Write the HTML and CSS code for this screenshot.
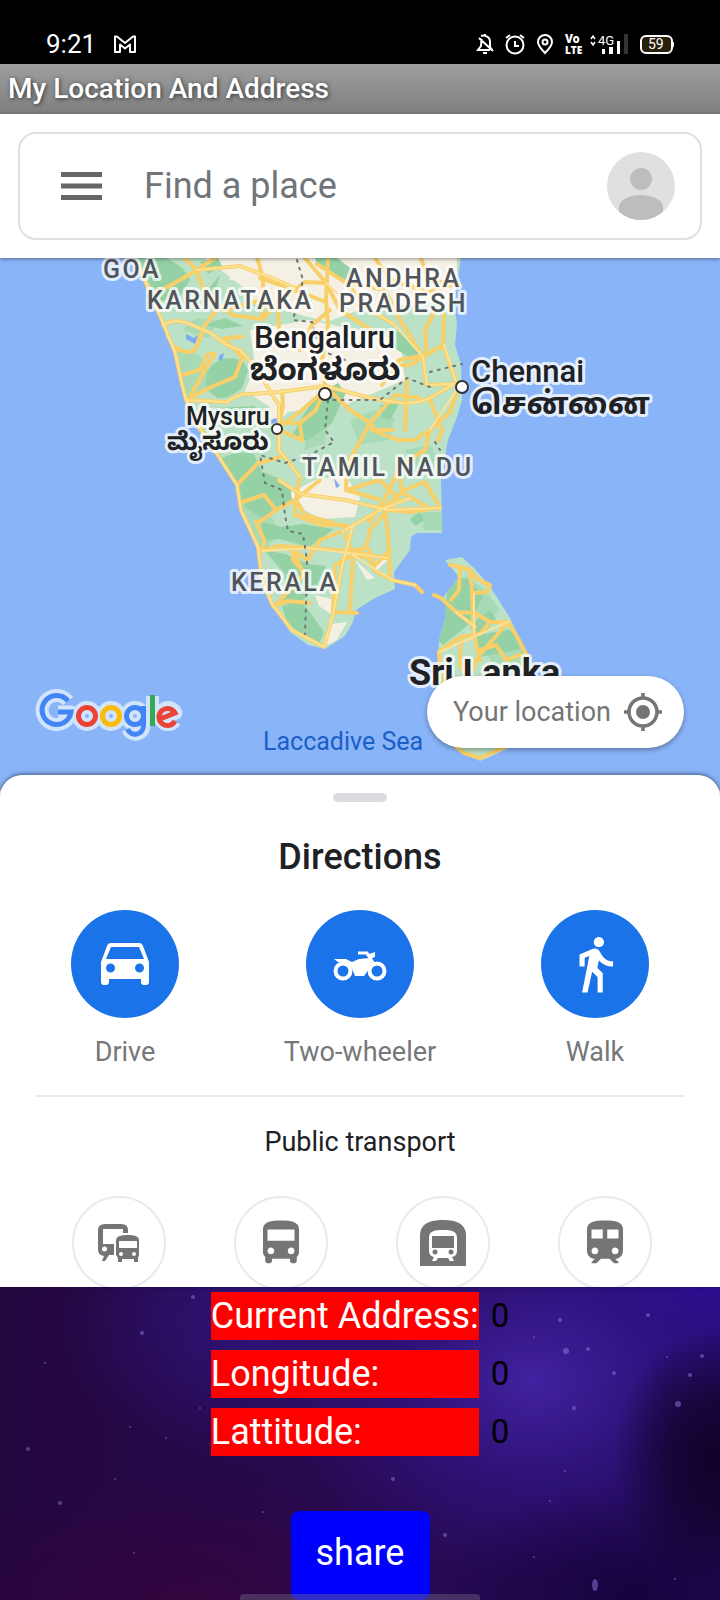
FILE: index.html
```html
<!DOCTYPE html>
<html lang="en">
<head>
<meta charset="utf-8">
<meta name="viewport" content="width=device-width, initial-scale=1">
<title>My Location And Address</title>
<link rel="stylesheet" href="styles.css">
</head>
<body>
<div class="screen">
  <div class="status">
    <span class="clock">9:21</span>
    <svg class="mail" viewBox="0 0 22 18" width="22" height="18"><path d="M1 17V1.500h2l8 6.500 8-6.500h2V17h-5V9.500l-5 4-5-4V17z" fill="none" stroke="#fff" stroke-width="2" stroke-linejoin="round"/></svg>
    <svg class="status-icons" viewBox="470 30 210 28" width="210" height="28">
      <g fill="none" stroke="#fff" stroke-width="2">
        <path d="M482 39c-1 2-1 4-1 7l-3 4h12M481 36c3-1 9 0 9 6v5l3 4M485 34v2M479 38l14 13M483 53h4"/>
        <circle cx="515" cy="45" r="8.500"/><path d="M515 41v5h4M506 38l4-3M524 38l-4-3"/>
        <path d="M545 53c-4-4-7-7-7-11a7 7 0 0 1 14 0c0 4-3 7-7 11z"/><circle cx="545" cy="42" r="2.500"/>
        <path d="M591 39l2-3 2 3M591 42l2 3 2-3" stroke-width="1.500"/>
        <rect x="641" y="36" width="31" height="17" rx="5" fill="#2a1f0a"/>
      </g>
      <path d="M602 49h3v5h-3zM609 47h4v7h-4zM617 41h3v13h-3z" fill="#fff"/>
      <path d="M624 34h4v20h-4z" fill="#333"/><path d="M673 42q1 2 0 5z" fill="#fff" stroke="#fff"/>
      <g class="tiny"><text x="565" y="43" font-size="12" font-weight="900">Vo</text><text x="565" y="54" font-size="12" font-weight="900" class="narrow">LTE</text><text x="598" y="45" font-size="13">4G</text><text x="648" y="49" font-size="14">59</text></g>
    </svg>
  </div>
  <h1 class="titlebar">My Location And Address</h1>
  <div class="header">
    <div class="search">
      <button class="icon-button" aria-label="Menu"><svg viewBox="0 0 42 28" width="42" height="28"><path d="M0 2.500h41M0 14h41M0 25.500h41" stroke="#666" stroke-width="5"/></svg></button>
      <input class="find" type="text" placeholder="Find a place" aria-label="Find a place">
      <button class="icon-button" aria-label="Account"><svg viewBox="0 0 68 68" width="68" height="68"><clipPath id="av"><circle cx="34" cy="34" r="34"/></clipPath><circle cx="34" cy="34" r="34" fill="#e0e0e0"/><circle cx="34" cy="27" r="11" fill="#bdbdbd"/><path clip-path="url(#av)" d="M12 68V55c0-7 10-12 22-12s22 5 22 12v13z" fill="#bdbdbd"/></svg></button>
    </div>
  </div>
  <div class="map">
    <svg class="map-art" viewBox="0 258 720 532" preserveAspectRatio="xMidYMin slice">
      <defs>
        <clipPath id="land"><path d="M135 258L145 285 160 312 166 337 176 352 180 380 186 400 194 425 220 459 237 484 241 512 258 546 262 580 273 606 290 632 308 645 325 649 345 636 353 622 356 610 375 598 395 589 394 572 410 550 411 537 416 533 442 533 441 478 448 440 457 417 462 400 461 364 455 345 457 325 454 300 461 258z"/><path d="M445 560L462 557 476 570 491 588 510 618 525 652 536 690 530 730 505 750 480 761 455 747 440 720 436 690 439 640 446 616 444 596 459 577z"/></clipPath>
      </defs>
      <path fill="#8ab4f8" d="M-400 258h1520v532H-400z"/>
      <g clip-path="url(#land)">
        <path fill="#bbe2c6" d="M100 250h460v540H100z"/>
        <path fill="#f5f0e4" d="M205 258l42 32 5 12 75 20 40-15 90-4V250H210zM250 330l60-10 90 20 5 40-60 25-65 8-35-22 10-25zM265 385l35 2-12 25-15 15zM280 498l35-18 30-5 15 22-5 20-33 2-20-10zM315 595l20 5-4 14-12-8zM331 624l16-2-10 18-12 6zM355 560l20 18-8 2zM376 560l12 0-13 12z"/>
        <g fill="#a9dab6">
          <path d="M176 352q22-4 30 12t-6 30l-16 4zM240 500l20 2 20 28-14 20-20-10zM350 420l25-10 20 8-6 22-30 4zM310 420l18 4-4 20-20 6zM405 450l25-5 8 14-20 10zM182 330l14-12 22 2-10 18z"/>
          <path d="M465 575l20 15 15 20-12 10-20-8zM485 650l30-15 15 25-30 20z"/>
        </g>
        <g fill="#94d1a5">
          <path d="M135 258h30q20 8 25 22l-10 16-20 6zM208 370q8-12 22-12t18 12l-6 18q-14 12-25 10l-12-10zM215 408l40-2 2 10-35 4zM222 458q16-8 32-4l8 18q14 4 28 14l2 14-26 20-20-12-20-35zM262 522l20 5 20-3 32 5-25 18-30-8-18 2zM264 550l22 4 22 10 18 2-10 20-18 20-15-2 2-30zM282 606l22-2 20 28-6 14-30-22zM313 398l25-15 8 10-14 30-25 18-15-5zM395 330q14 6 25 22l-6 8-20-12zM380 405l20-3-10 18-8-2zM410 520q12-14 14 0l-8 6z"/>
          <path d="M450 575l18 4 15 18-15 28-25 20-6-5 8-35zM470 625l20-15 6 8-12 16 28-5 8 20-40 8z"/>
          <path d="M315 258l22 0 16 12-8 12-28-18zM220 275l-18 22 12-2zM200 262l18-4 4 8-14 8zM205 325l20-7 18 8-22 3z"/>
        </g>
        <path fill="#a9dab6" d="M423 512h19v18h-19z"/>
        <path fill="#f5f0e4" d="M236 258h35l-2 24-40-2zM360 290l20 4-2 14-20-2z"/>
        <path fill="#7baaf0" d="M186 334l8 4 4-3-3 9-9-5zM220 355l4-2-2 8-4-2zM334 478l6 8-4 2zM270 420l6-2 2 4-7 2z"/>
      </g>
      <g fill="none" stroke-linejoin="round" stroke-linecap="round">
        <g class="roads">
          <path d="M137 262L151 295 163 323 175 352 181 380 186 400 199 427 219 457 237 485 241 510 258 547 262 580 272 604 292 630 324 647 333 615 343 562 353 525M163 325Q175 318 187 323T211 333Q225 346 240 350L260 372Q268 390 279 405L279 450 300 477 296 500 305 515 350 528M175 347Q187 355 195 350L205 325 220 306 232 315 262 319M182 375L200 370 207 355Q220 350 210 361L190 397M186 400L211 387 235 377 242 358 224 338 242 337M186 400L227 402Q240 392 251 394L280 392 325 386 370 398 395 402Q415 405 430 398L454 384M151 295L173 284 197 270 215 258M197 270L185 258M197 270Q202 290 209 294L225 310M197 270L240 266 272 278 295 288M257 258Q265 280 263 300L262 319M305 258L326 283 340 310 371 330M317 264L345 282 370 310 395 325M328 258L326 300 328 325 322 360 325 386"/>
          <path d="M326 302L292 289 260 278M263 319L278 302 305 282 326 283M279 330L278 302M375 258L390 280 430 292 454 284M421 258L428 280 460 285M399 318L423 357 426 385 454 384M435 311L425 330 427 355 399 360 382 385M444 315L443 345 423 357M443 345L452 370 458 388 450 412 430 430 415 440 398 440 372 430M407 380L405 430M360 365L410 365 423 357M282 391L283 405 279 427M279 427L301 411 319 395 325 386M279 423L300 423 316 410 325 388M279 430L302 440 300 425M325 386L350 410 370 423 395 395 420 398M370 423L358 445 347 465 346 490 378 499M370 423L375 430 393 430M430 430L425 450 401 465 384 500 369 522M279 480L300 494 345 500 388 510 440 508M237 485L258 463 280 457M242 502L264 495 276 510 261 521 256 522 264 540 262 551M262 551L278 546 310 548 350 551 387 558M276 510L295 500 320 480M295 500L295 515 322 525 345 525M343 531L380 510 410 498M345 535L353 555 350 612M353 555L335 565 333 612 357 613M343 531L320 540 308 560 292 550 300 565 303 575 278 603M293 548L293 560 302 570M310 603L288 601 273 606M353 555L370 558 374 570 392 580 415 585 422 592M385 505L388 535 390 575M388 510L370 530 366 548 350 551M380 510L405 490 425 482 440 508M400 500L380 480 347 490M369 550L374 566 390 550M398 465L402 492 430 509M430 400L442 430 438 440M330 310L312 325 300 350M345 282L385 290 399 318M225 310L262 300M388 510L410 512 430 509"/>
          <path d="M450 565L460 567 459 590 451 600M460 567L470 570 472 592 474 635 480 660M470 570Q475 580 490 585L487 592 474 593M434 595L441 598 456 612 475 627M456 612L475 613 490 622 508 622 519 640 528 658 535 690M508 622L478 657 470 675M439 652L460 637 480 634 490 622M439 652L441 680 437 710M461 640L460 665 468 678M480 650L496 645 506 660 520 655M450 742L464 753 480 758 510 745"/>
        </g>
        <g class="roads-light">
          <path d="M137 262L151 295 163 323 175 352 181 380 186 400 199 427 219 457 237 485 241 510 258 547 262 580 272 604 292 630 324 647 333 615 343 562 353 525M163 325Q175 318 187 323T211 333Q225 346 240 350L260 372Q268 390 279 405L279 450 300 477M186 400L227 402Q240 392 251 394L280 392 325 386 370 398 395 402Q415 405 430 398L454 384M197 270L240 266 272 278 295 288M326 283L345 300 370 310 395 325 423 357 427 385 454 384M444 345L458 388 430 430M343 531L380 510 410 498M262 551L310 548 387 558M353 555L392 580 415 585M279 480L300 494 345 500 388 510 440 508M456 612L475 627M439 652L480 634 508 622M474 593L474 635"/>
        </g>
        <path d="M297 260L303 280 293 320 312 322 320 350 345 360M430 387L407 378 380 400 350 400 328 400 325 430 334 442 310 455 285 463 260 455 265 483 282 490 285 515 288 531 303 534 307 560 306 605 305 634M430 372L462 364M435 442L440 450" stroke="#71767a" stroke-width="2" stroke-dasharray="2 6"/>
      </g>
      <g class="dots"><circle cx="325" cy="394" r="6"/><circle cx="462" cy="387" r="6"/><circle cx="277" cy="429" r="5"/></g>
      <g class="state">
        <text x="103" y="278">GOA</text><text x="147" y="309">KARNATAKA</text><text x="346" y="287">ANDHRA</text><text x="339" y="312">PRADESH</text><text x="302" y="476">TAMIL NADU</text><text x="231" y="591">KERALA</text>
      </g>
      <g class="city">
        <text x="254" y="348" font-size="31">Bengaluru</text><text x="250" y="380" font-size="31" class="local">ಬೆಂಗಳೂರು</text>
        <text x="471" y="382" font-size="31">Chennai</text><text x="471" y="414" font-size="31" class="local">சென்னை</text>
        <text x="186" y="425" font-size="25">Mysuru</text><text x="167" y="450" font-size="25" class="local">ಮೈಸೂರು</text>
        <text x="409" y="685" font-size="36" font-weight="700">Sri Lanka</text>
      </g>
      <text class="sea" x="263" y="750">Laccadive Sea</text>
      <g fill="none" stroke-width="5">
        <g stroke="#d2e3fc" stroke-width="13" stroke-linejoin="round"><path d="M68 701a14.500 14.500 0 1 0 3 11H58M152.500 696v28"/><circle cx="87" cy="716" r="8.500"/><circle cx="111" cy="716" r="8.500"/><circle cx="135" cy="716" r="8.500"/><path d="M144 708v17c0 11-13 12-16 4"/><path d="M160 719l16-6a8.500 8.500 0 1 0-1 8"/></g>
        <path d="M68 701a14.500 14.500 0 1 0 3 11H58" stroke="#4285f4"/><circle cx="87" cy="716" r="8.500" stroke="#ea4335"/><circle cx="111" cy="716" r="8.500" stroke="#fbbc04"/><g stroke="#4285f4"><circle cx="135" cy="716" r="8.500"/><path d="M143.500 706v19c0 11-13 12-16 4"/></g><path d="M152.500 695v31" stroke="#34a853"/><path d="M160 719l15-6a8.500 8.500 0 1 0 0 8" stroke="#ea4335"/>
      </g>
    </svg>
    <button class="locate"><span>Your location</span><svg viewBox="0 0 38 38" width="38" height="38"><circle cx="19" cy="19" r="14" fill="none" stroke="#757575" stroke-width="3.500"/><circle cx="19" cy="19" r="7" fill="#757575"/><path d="M19 0v6M19 32v6M0 19h6M32 19h6" stroke="#757575" stroke-width="3.500"/></svg></button>
  </div>
  <section class="sheet">
    <div class="handle"></div>
    <h2 class="heading">Directions</h2>
    <div class="modes">
      <button class="mode"><span class="disc"><svg viewBox="0 0 48 42" width="48" height="42"><path fill="#fff" fill-rule="evenodd" d="M10 0h28q3 0 4 3l6 16v20q0 3-3 3h-2q-3 0-3-3v-3H8v3q0 3-3 3H3q-3 0-3-3V19L6 3q1-3 4-3zm0 4L5 16h38L38 4zM5 25a4.500 4.500 0 1 0 9 0 4.500 4.500 0 0 0-9 0zm29 0a4.500 4.500 0 1 0 9 0 4.500 4.500 0 0 0-9 0z"/></svg></span>Drive</button>
      <button class="mode"><span class="disc"><svg viewBox="0 0 54 54" width="54" height="54"><g fill="none" stroke="#fff" stroke-width="4"><circle cx="10" cy="34" r="7.500"/><circle cx="44" cy="34" r="7.500"/><path d="M25 16h9l8 13" stroke-width="3"/></g><path fill="#fff" d="M1 22h12l6 3 7-3 10-1 5 4-10 14H22l-2-5q-2-7-10-8l-5-1zM33 18l9-3v5l-5 2z"/></svg></span>Two-wheeler</button>
      <button class="mode"><span class="disc"><svg viewBox="0 0 24 24" width="62" height="62"><path fill="#fff" d="M13.500 5.500c1.100 0 2-.9 2-2s-.9-2-2-2-2 .9-2 2 .9 2 2 2zM9.800 8.900L7 23h2.100l1.800-8 2.100 2v6h2v-7.500l-2.100-2 .6-3C14.800 12 16.800 13 19 13v-2c-1.900 0-3.500-1-4.300-2.400l-1-1.600c-.4-.6-1-1-1.700-1-.3 0-.5.1-.8.1L6 8.300V13h2V9.600l1.800-.7"/></svg></span>Walk</button>
    </div>
    <h3 class="subheading">Public transport</h3>
    <div class="transit">
      <button class="ring" aria-label="Transit"><svg viewBox="0 0 42 38" width="42" height="38"><path fill="#757575" fill-rule="evenodd" d="M7 0h16q7 0 7 6v3h-5V5H5v15h11v11h-5l-4 6H4l2-5q-6-1-6-6V6q0-6 7-6zM4 25a2.500 2.500 0 1 0 5 0 2.500 2.500 0 0 0-5 0z"/><path fill="#757575" fill-rule="evenodd" d="M30 11q11 0 11 5v15l-1 3v4h-4v-3H24v3h-4v-4l-2-3V16q0-5 12-5zm-9 6v7h18v-7zm0 13a2 2 0 1 0 4 0 2 2 0 0 0-4 0zm13 0a2 2 0 1 0 4 0 2 2 0 0 0-4 0z"/></svg></button>
      <button class="ring" aria-label="Bus"><svg viewBox="0 0 24 24" width="54" height="54"><path fill="#757575" d="M4 16c0 .88.39 1.670 1 2.220V20c0 .55.45 1 1 1h1c.55 0 1-.45 1-1v-1h8v1c0 .55.45 1 1 1h1c.55 0 1-.45 1-1v-1.780c.61-.55 1-1.340 1-2.220V6c0-3.500-3.580-4-8-4s-8 .5-8 4v10zm3.500 1c-.83 0-1.500-.67-1.500-1.500S6.670 14 7.500 14s1.500.67 1.500 1.500S8.330 17 7.500 17zm9 0c-.83 0-1.500-.67-1.500-1.500s.67-1.500 1.500-1.500 1.500.67 1.500 1.500-.67 1.500-1.500 1.500zm1.500-6H6V6h12v5z"/></svg></button>
      <button class="ring" aria-label="Metro"><svg viewBox="0 0 46 46" width="46" height="46"><path fill="#757575" d="M0 46V16C0 4 9 0 23 0s23 4 23 16v30z"/><path fill="#fff" d="M9 18c0-7 5-8 14-8s14 1 14 8v13q0 5-5 6l2 4h-4l-2-3H18l-2 3h-4l2-4q-5-1-5-6z"/><path fill="#757575" d="M12 16h22v12H12z"/><circle cx="15" cy="32" r="2.500" fill="#757575"/><circle cx="31" cy="32" r="2.500" fill="#757575"/></svg></button>
      <button class="ring" aria-label="Train"><svg viewBox="0 0 24 24" width="54" height="54"><path fill="#757575" d="M12 2c-4.420 0-8 .5-8 4v9.500C4 17.430 5.570 19 7.500 19L6 20.500v.5h2.200l2-2H14l2 2h2v-.5L16.500 19c1.930 0 3.500-1.570 3.500-3.500V6c0-3.500-3.580-4-8-4zM7.500 17c-.83 0-1.500-.67-1.500-1.500S6.670 14 7.500 14s1.500.67 1.500 1.500S8.330 17 7.500 17zm3.500-7H6V6h5v4zm5.500 7c-.83 0-1.500-.67-1.500-1.500s.67-1.500 1.500-1.500 1.500.67 1.500 1.500-.67 1.500-1.500 1.500zm1.500-7h-5V6h5v4z"/></svg></button>
    </div>
  </section>
  <section class="space">
    <svg class="stars" viewBox="0 0 720 313" preserveAspectRatio="none" fill="#8d7de0"><circle cx="193" cy="10" r="2"/><circle cx="142" cy="46" r="2"/><circle cx="200" cy="121" r="1"/><circle cx="166" cy="151" r="1"/><circle cx="28" cy="162" r="2"/><circle cx="60" cy="216" r="2"/><circle cx="115" cy="192" r="1"/><circle cx="393" cy="192" r="2"/><circle cx="263" cy="225" r="1"/><circle cx="560" cy="33" r="2"/><circle cx="566" cy="64" r="3"/><circle cx="588" cy="62" r="2"/><circle cx="534" cy="50" r="1"/><circle cx="648" cy="28" r="2"/><circle cx="702" cy="69" r="2"/><circle cx="690" cy="88" r="2"/><circle cx="667" cy="70" r="1"/><circle cx="614" cy="86" r="2"/><circle cx="678" cy="117" r="3"/><circle cx="574" cy="121" r="2"/><circle cx="445" cy="248" r="2"/><ellipse cx="595" cy="298" rx="3" ry="6"/><circle cx="534" cy="270" r="1"/><circle cx="550" cy="214" r="1"/><circle cx="675" cy="292" r="1"/><circle cx="565" cy="184" r="1"/><circle cx="134" cy="266" r="1"/><circle cx="45" cy="76" r="1"/><circle cx="130" cy="140" r="1"/></svg>
    <table class="readout">
      <tr><th scope="row">Current Address:</th><td>0</td></tr>
      <tr><th scope="row">Longitude:</th><td>0</td></tr>
      <tr><th scope="row">Lattitude:</th><td>0</td></tr>
    </table>
    <button class="share">share</button>
    <div class="home-bar"></div>
  </section>
</div>
</body>
</html>
```
FILE: styles.css
```css
* { box-sizing: border-box; }
body { margin: 0; font-family: Roboto, "Liberation Sans", sans-serif; }
button { font: inherit; border: 0; background: none; padding: 0; cursor: pointer; }
svg { display: block; }
.screen { display: flex; flex-direction: column; min-height: 100vh; background: #fff; }
.status { display: flex; align-items: center; gap: 18px; height: 64px; padding: 24px 40px 0 46px; background: #000; color: #fff; }
.clock { font-size: 26px; line-height: 40px; }
.status-icons { margin-left: auto; }
.tiny { fill: #fff; }
.narrow { font-family: "Open Sans", sans-serif; font-size: 10px; }
.titlebar { margin: 0; padding: 0 8px; font-size: 28px; font-weight: 500; line-height: 50px; color: #fff; background: linear-gradient(#9e9e9e, #7f7f7f); text-shadow: 1px 1px 4px #333; }
.header { position: relative; z-index: 1; padding: 18px; background: #fff; box-shadow: 0 1px 4px rgba(0, 0, 0, .4); }
.search { display: flex; align-items: center; height: 108px; padding: 0 25px 0 41px; border: 2px solid #e0e0e0; border-radius: 18px; }
.icon-button { flex: none; }
.find { flex: 1; min-width: 0; margin: 0 20px 0 41px; padding: 0; border: 0; outline: 0; background: none; font: 36px/48px Roboto, sans-serif; color: #70757a; }
.find::placeholder { color: #70757a; opacity: 1; }
.map { position: relative; z-index: 0; height: 532px; overflow: hidden; background: #8ab4f8; }
.map-art { width: 100%; height: 100%; }
.roads { stroke: #f8cf68; stroke-width: 4; }
.roads-light { stroke: #fde293; stroke-width: 2; }
.dots { fill: #fff; stroke: #333; stroke-width: 2; }
.map-art text { font-family: Roboto, "Noto Sans", "Noto Sans Kannada", "Noto Sans Tamil", sans-serif; }
.state, .city { paint-order: stroke; stroke: rgba(255, 255, 255, .75); stroke-width: 6px; stroke-linejoin: round; }
.state { fill: #50555b; font-size: 25px; font-weight: 500; letter-spacing: 2.5px; }
.city { fill: #202124; font-weight: 500; }
.local { font-weight: 700; }
.sea { fill: #1a5fc8; font-size: 25px; }
.locate { position: absolute; right: 36px; bottom: 42px; display: flex; align-items: center; gap: 13px; padding: 17px 22px 17px 26px; border-radius: 36px; background: #fff; box-shadow: 0 2px 5px rgba(0, 0, 0, .35); font-size: 27px; line-height: 38px; color: #757575; }
.sheet { position: relative; z-index: 1; height: 512px; margin-top: -15px; padding: 18px 36px 0; overflow: hidden; border-radius: 22px 22px 0 0; background: #fff; box-shadow: 0 -1px 4px rgba(0, 0, 0, .5); }
.handle { width: 54px; height: 9px; margin: 0 auto; border-radius: 5px; background: #dadce0; }
.heading { margin: 32px 0 30px; font-size: 36px; font-weight: 500; line-height: 46px; text-align: center; color: #202124; }
.modes { display: flex; justify-content: space-between; padding-bottom: 26px; border-bottom: 2px solid #e8eaed; }
.mode { display: flex; flex-direction: column; align-items: center; gap: 17px; width: 178px; font-size: 27px; line-height: 34px; color: #757779; }
.disc { display: flex; align-items: center; justify-content: center; width: 108px; height: 108px; border-radius: 50%; background: #1a73e8; }
.subheading { margin: 28px 0 37px; font-size: 27px; font-weight: 400; line-height: 34px; text-align: center; color: #202124; }
.transit { display: flex; justify-content: space-between; padding: 0 32px 0 36px; }
.ring { display: flex; flex: none; align-items: center; justify-content: center; width: 94px; height: 94px; border: 2px solid #e8eaed; border-radius: 50%; }
.space { position: relative; display: flex; flex: 1; flex-direction: column; align-items: center; overflow: hidden; background: radial-gradient(100px 130px at 99% 55%, rgba(16, 1, 38, .95), rgba(16, 1, 38, .7) 45%, rgba(16, 1, 38, 0)), radial-gradient(200px 110px at 88% 98%, rgba(20, 2, 60, .9), rgba(20, 2, 60, 0)), radial-gradient(260px 200px at 74% 30%, rgba(68, 36, 168, .9), rgba(50, 22, 140, .6) 50%, rgba(40, 15, 110, 0)), radial-gradient(200px 110px at 98% 0, rgba(40, 12, 150, .9), rgba(38, 10, 134, 0)), radial-gradient(200px 150px at 36% 10%, rgba(48, 24, 135, .8), rgba(43, 19, 121, 0)), radial-gradient(260px 120px at 26% 100%, rgba(56, 4, 58, .7), rgba(56, 4, 58, 0)), linear-gradient(90deg, #24063f, #28094f 50%, #230b5a); }
.stars { position: absolute; inset: 0; width: 100%; height: 100%; opacity: .5; }
.readout { position: relative; margin: 5px 0 0; border-spacing: 0; font-size: 36px; line-height: 48px; }
.readout th { padding: 0; font-weight: 400; text-align: left; color: #fff; background: #f00 content-box; }
.readout td { padding: 0 0 0 12px; font-size: 33px; color: #000; }
.readout tr + tr th, .readout tr + tr td { padding-top: 10px; }
.share { position: relative; width: 139px; height: 89px; margin-top: 55px; padding-bottom: 6px; border-radius: 8px; background: #00f; color: #fff; font-size: 36px; line-height: 44px; }
.home-bar { position: absolute; bottom: 0; width: 240px; height: 6px; border-radius: 4px 4px 0 0; background: rgba(110, 100, 130, .45); }
```
